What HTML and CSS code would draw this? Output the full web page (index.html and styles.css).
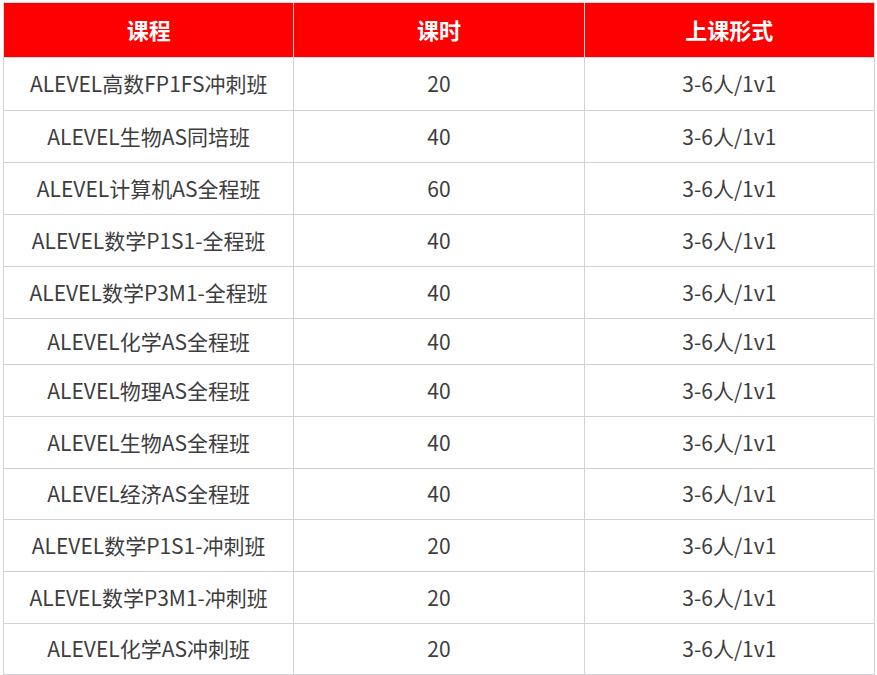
FILE: index.html
```html
<!DOCTYPE html>
<html lang="zh-CN">
<head>
<meta charset="utf-8">
<title>课程表</title>
<link rel="stylesheet" href="styles.css">
</head>
<body>
<div class="wrap">
<table class="course-table">
  <thead>
    <tr class="head-row"><th>课程</th><th>课时</th><th>上课形式</th></tr>
  </thead>
  <tbody>
    <tr class="r53"><td>ALEVEL高数FP1FS冲刺班</td><td>20</td><td>3-6人/1v1</td></tr>
    <tr class="r52"><td>ALEVEL生物AS同培班</td><td>40</td><td>3-6人/1v1</td></tr>
    <tr class="r52"><td>ALEVEL计算机AS全程班</td><td>60</td><td>3-6人/1v1</td></tr>
    <tr class="r52"><td>ALEVEL数学P1S1-全程班</td><td>40</td><td>3-6人/1v1</td></tr>
    <tr class="r52"><td>ALEVEL数学P3M1-全程班</td><td>40</td><td>3-6人/1v1</td></tr>
    <tr class="r46"><td>ALEVEL化学AS全程班</td><td>40</td><td>3-6人/1v1</td></tr>
    <tr class="r52"><td>ALEVEL物理AS全程班</td><td>40</td><td>3-6人/1v1</td></tr>
    <tr class="r52"><td>ALEVEL生物AS全程班</td><td>40</td><td>3-6人/1v1</td></tr>
    <tr class="r51"><td>ALEVEL经济AS全程班</td><td>40</td><td>3-6人/1v1</td></tr>
    <tr class="r52"><td>ALEVEL数学P1S1-冲刺班</td><td>20</td><td>3-6人/1v1</td></tr>
    <tr class="r52"><td>ALEVEL数学P3M1-冲刺班</td><td>20</td><td>3-6人/1v1</td></tr>
    <tr class="r51"><td>ALEVEL化学AS冲刺班</td><td>20</td><td>3-6人/1v1</td></tr>
  </tbody>
</table>
</div>
</body>
</html>
```
FILE: styles.css
```css
html, body {
  margin: 0;
  padding: 0;
  background: #ffffff;
}
.wrap {
  padding: 2px 2px 0 3px;
}
.course-table {
  width: 872px;
  border-collapse: collapse;
  table-layout: fixed;
  font-family: "Noto Sans CJK SC", "Noto Sans", sans-serif;
}
.course-table th,
.course-table td {
  border: 1px solid #d2d2d8;
  text-align: center;
  vertical-align: middle;
  padding: 0 0 2px 0;
}
.course-table th {
  background: #ff0000;
  color: #ffffff;
  font-size: 22px;
  font-weight: 700;
  border-color: #d8d8dc;
  padding-bottom: 3px;
}
.course-table td {
  color: #3d3d40;
  font-size: 21px;
  font-weight: 400;
}
.head-row { height: 55px; }
.r53 { height: 53px; }
.r52 { height: 52px; }
.r51 { height: 51px; }
.r46 { height: 46px; }
```
